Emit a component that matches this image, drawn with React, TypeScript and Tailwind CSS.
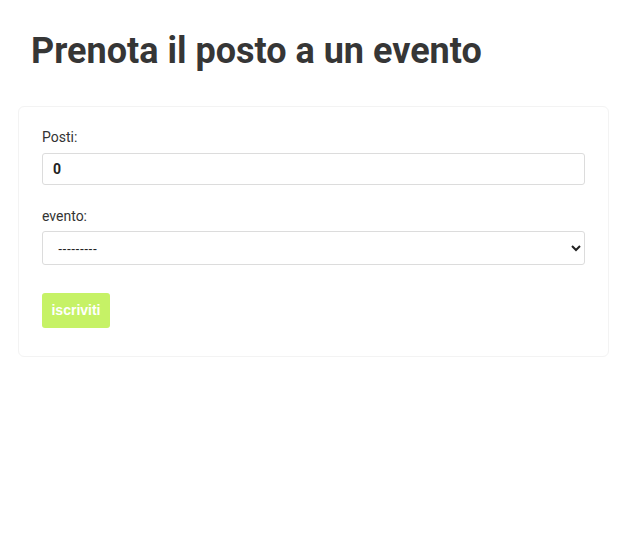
export default function App() {
  return (
    <div className="min-h-[534px] bg-white font-['Roboto',sans-serif] text-[#333]">
      <h1 className="pl-[31px] pt-[27px] text-[36px] font-bold leading-[48px] text-[#363636]">
        Prenota il posto a un evento
      </h1>

      <div className="mx-[18px] mt-[31px] w-[591px] rounded-md border border-[#f3f3f3] bg-white px-[23px] pb-[28px] pt-[20px]">
        <form className="flex flex-col">
          <label className="text-[14px] leading-[20px] text-[#333]">Posti:</label>
          <input
            type="number"
            defaultValue={0}
            className="mt-[6px] h-[32px] w-full rounded-[3px] border border-[#dcdcdc] bg-white px-[10px] text-[14px] font-bold text-[#222] outline-none"
          />

          <label className="mt-[21px] text-[14px] leading-[20px] text-[#333]">evento:</label>
          <select className="mt-[5px] h-[34px] w-full rounded-[3px] border border-[#dcdcdc] bg-white pl-[11px] pr-[6px] font-['Liberation_Sans',sans-serif] text-[13px] text-[#222]">
            <option>---------</option>
          </select>

          <div className="mt-[28px]">
            <button
              type="button"
              className="h-[35px] w-[68px] rounded-[3px] bg-[#c6f266] font-['Liberation_Sans',sans-serif] text-[14px] font-bold text-white"
            >
              iscriviti
            </button>
          </div>
        </form>
      </div>
    </div>
  );
}
